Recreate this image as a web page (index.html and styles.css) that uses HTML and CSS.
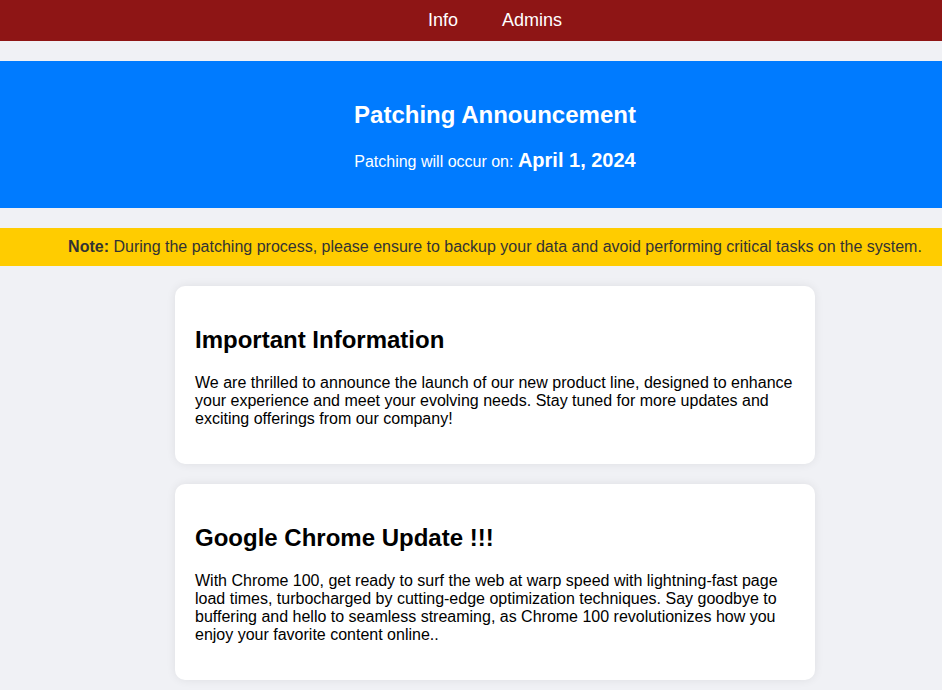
FILE: index.html
```html
<!DOCTYPE html>
<html>
<head>
<meta charset="utf-8">
<link rel="stylesheet" href="styles.css">
</head>
<body>
<nav class="topnav">
  <a href="#" class="navlink">Info</a>
  <a href="#" class="navlink">Admins</a>
</nav>
<section class="banner">
  <h2 class="banner-title">Patching Announcement</h2>
  <p class="banner-text">Patching will occur on: <span class="banner-date">April 1, 2024</span></p>
</section>
<div class="note"><strong>Note:</strong> During the patching process, please ensure to backup your data and avoid performing critical tasks on the system.</div>
<main class="content">
  <div class="card">
    <h2 class="card-title">Important Information</h2>
    <p class="card-text">We are thrilled to announce the launch of our new product line, designed to enhance your experience and meet your evolving needs. Stay tuned for more updates and exciting offerings from our company!</p>
  </div>
  <div class="card">
    <h2 class="card-title">Google Chrome Update !!!</h2>
    <p class="card-text">With Chrome 100, get ready to surf the web at warp speed with lightning-fast page load times, turbocharged by cutting-edge optimization techniques. Say goodbye to buffering and hello to seamless streaming, as Chrome 100 revolutionizes how you enjoy your favorite content online..</p>
  </div>
</main>
</body>
</html>
```
FILE: styles.css
```css
html, body {
  margin: 0;
  padding: 0;
}
body {
  background: #f0f1f5;
  font-family: "Liberation Sans", Arial, sans-serif;
  color: #000;
}
.topnav {
  background: #8e1515;
  display: flex;
  justify-content: center;
  gap: 44px;
  padding: 10px 0 10px 48px;
}
.navlink {
  color: #fff;
  text-decoration: none;
  font-size: 18px;
  line-height: 21px;
}
.banner {
  margin-top: 20px;
  background: #007bff;
  color: #fff;
  text-align: center;
  padding: 20px 20px 20px 68px;
}
.banner-title {
  font-size: 24px;
  margin: 20px 0;
}
.banner-text {
  font-size: 16px;
  margin: 16px 0;
}
.banner-date {
  font-size: 20px;
  font-weight: bold;
}
.note {
  margin-top: 20px;
  background: #ffcc00;
  color: #333;
  font-size: 16px;
  padding: 10px 0 10px 48px;
  text-align: center;
  white-space: nowrap;
}
.content {
  display: flex;
  flex-direction: column;
  align-items: center;
  gap: 20px;
  padding: 20px 0 20px 48px;
}
.card {
  width: 600px;
  background: #fff;
  border-radius: 10px;
  padding: 20px;
  box-shadow: 0 0 10px rgba(0, 0, 0, 0.08);
}
.card-title {
  font-size: 24px;
  margin: 20px 0;
}
.card-text {
  font-size: 16px;
  line-height: 18px;
  margin: 16px 0;
}
```
